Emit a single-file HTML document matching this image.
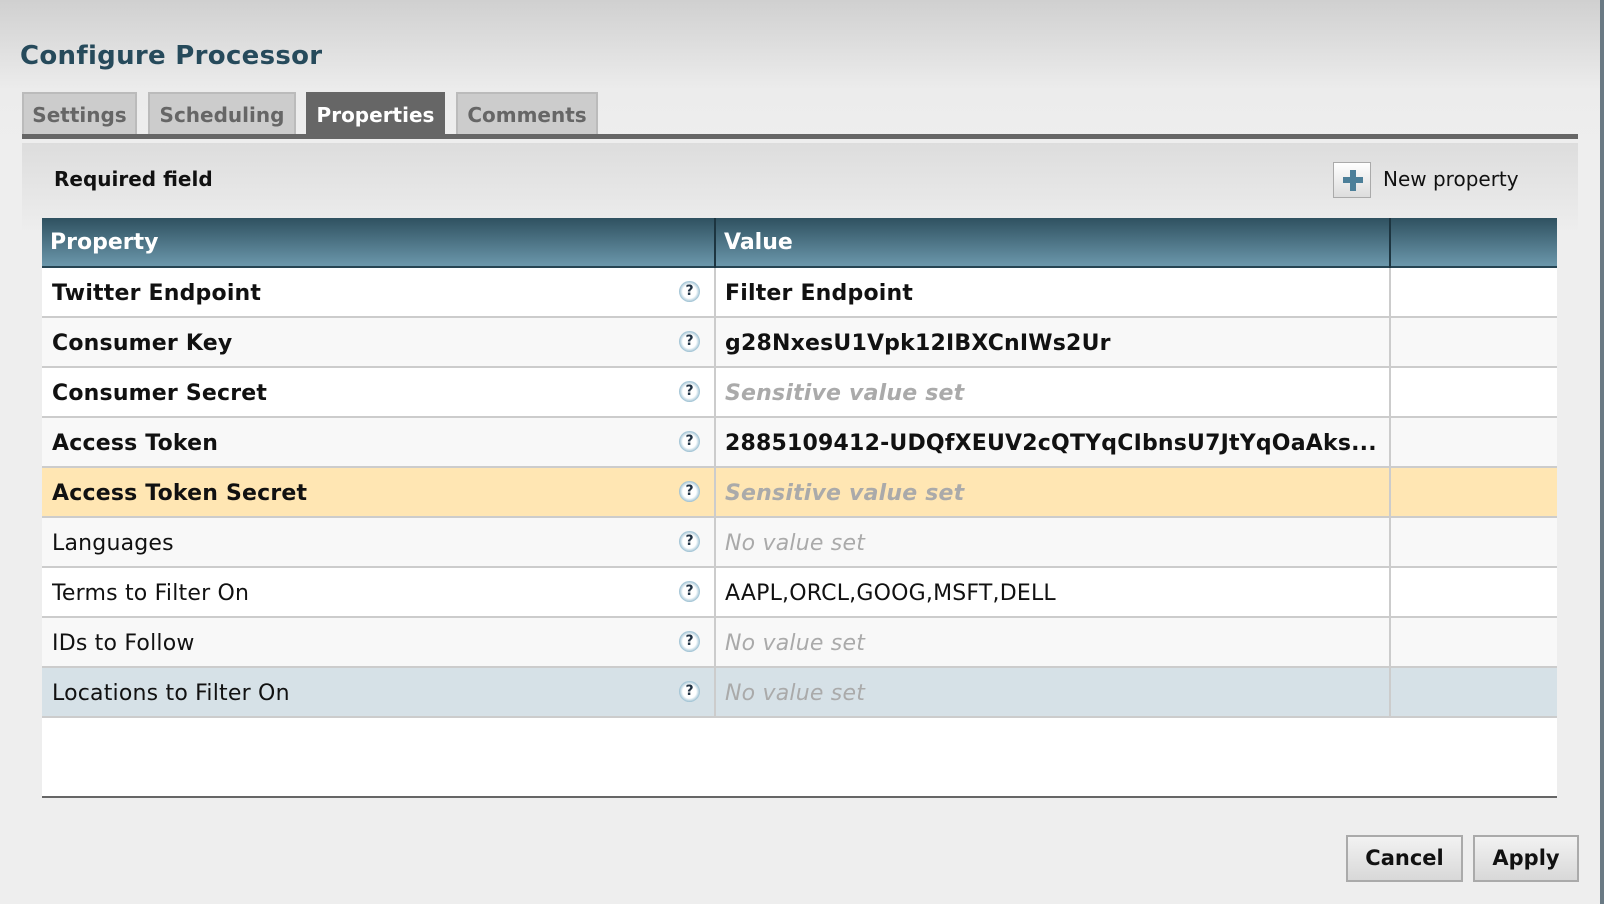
<!DOCTYPE html>
<html><head><style>
*{margin:0;padding:0;box-sizing:border-box}
body{width:1604px;height:904px;overflow:hidden;background:#eee;font-family:"DejaVu Sans","Liberation Sans",sans-serif;position:relative}
.top{position:absolute;left:0;top:0;width:1604px;height:150px;background:linear-gradient(#d0d0d0,#ececec 90px,#eee)}
.edge{position:absolute;left:1600px;top:0;width:4px;height:904px;background:#6a7a84}
h1{position:absolute;left:20px;top:41px;font-size:26px;color:#264a5b;font-weight:bold;letter-spacing:0.3px}
.tab{position:absolute;top:92px;height:42px;background:#ccc;border:2px solid #bbb;border-bottom:none;color:#666;font-weight:bold;font-size:20px;text-align:center;line-height:42px}
.tab.a{background:#666;color:#fff;border-color:#666}
.bar{position:absolute;left:22px;top:134px;width:1556px;height:5px;background:#666}
.panel{position:absolute;left:22px;top:143px;width:1556px;height:90px;background:linear-gradient(#ddd,#e8e8e8 60px,#eee)}
.req{position:absolute;left:54px;top:167px;font-size:20px;font-weight:bold;color:#111}
.np{position:absolute;left:1333px;top:162px;width:38px;height:36px;border:1px solid #aaa;background:linear-gradient(#fff,#ddd)}
.np:before{content:"";position:absolute;left:16px;top:7px;width:6px;height:21px;background:#4c7f99}
.np:after{content:"";position:absolute;left:9px;top:14px;width:20px;height:6px;background:#4c7f99}
.npt{position:absolute;left:1383px;top:167px;font-size:20px;color:#111}
.tbl{position:absolute;left:42px;top:218px;width:1515px;height:580px;background:#fff;border-bottom:2px solid #666}
.hd{position:absolute;left:0;top:0;width:1515px;height:50px;background:linear-gradient(#2f5160,#6b97ab);border-bottom:2px solid #264452;color:#fff;font-weight:bold;font-size:22px}
.hd span{position:absolute;top:12px}
.vl{position:absolute;top:0;width:2px;height:50px;background:#1d3540}
.row{position:absolute;left:0;width:1515px;height:50px;border-bottom:2px solid #ccc;font-size:22px;color:#111;letter-spacing:0.2px}
.row div{position:absolute;top:2px;height:48px;line-height:48px;white-space:nowrap;overflow:hidden}
.c1{left:10px;width:600px}
.c2{left:683px;width:700px}
.d{position:absolute;top:0;width:2px;height:50px;background:#ccc}
.b{font-weight:bold}
.g{color:#aaa;font-style:italic}
.q{position:absolute;left:637px;top:13px;width:21px;height:21px;border-radius:50%;background:radial-gradient(#fff 45%,#9cc0d2 70%,#5d8ea8);font-size:14px;font-weight:bold;color:#234;text-align:center;line-height:21px;letter-spacing:0}
.btn{position:absolute;top:835px;height:47px;border:2px solid #aaa;background:linear-gradient(#f2f2f2,#d8d8d8);font-weight:bold;font-size:21px;text-align:center;line-height:43px;color:#111}
</style></head><body>
<div class="top"></div>
<div class="edge"></div>
<h1>Configure Processor</h1>
<div class="tab" style="left:22px;width:115px">Settings</div>
<div class="tab" style="left:148px;width:148px">Scheduling</div>
<div class="tab a" style="left:306px;width:139px">Properties</div>
<div class="tab" style="left:456px;width:142px">Comments</div>
<div class="bar"></div>
<div class="panel"></div>
<div class="req">Required field</div>
<div class="np"></div><div class="npt">New property</div>
<div class="tbl">
<div class="hd"><span style="left:8px">Property</span><span style="left:682px">Value</span><div class="vl" style="left:672px"></div><div class="vl" style="left:1347px"></div></div>
<div class="row" style="top:50px;background:#fff"><div class="c1 b">Twitter Endpoint</div><span class="q">?</span><span class="d" style="left:672px"></span><div class="c2 b">Filter Endpoint</div><span class="d" style="left:1347px"></span></div>
<div class="row" style="top:100px;background:#f8f8f8"><div class="c1 b">Consumer Key</div><span class="q">?</span><span class="d" style="left:672px"></span><div class="c2 b">g28NxesU1Vpk12IBXCnIWs2Ur</div><span class="d" style="left:1347px"></span></div>
<div class="row" style="top:150px;background:#fff"><div class="c1 b">Consumer Secret</div><span class="q">?</span><span class="d" style="left:672px"></span><div class="c2 b g">Sensitive value set</div><span class="d" style="left:1347px"></span></div>
<div class="row" style="top:200px;background:#f8f8f8"><div class="c1 b">Access Token</div><span class="q">?</span><span class="d" style="left:672px"></span><div class="c2 b">2885109412-UDQfXEUV2cQTYqCIbnsU7JtYqOaAks...</div><span class="d" style="left:1347px"></span></div>
<div class="row" style="top:250px;background:#ffe6b3"><div class="c1 b">Access Token Secret</div><span class="q">?</span><span class="d" style="left:672px"></span><div class="c2 b g">Sensitive value set</div><span class="d" style="left:1347px"></span></div>
<div class="row" style="top:300px;background:#f8f8f8"><div class="c1">Languages</div><span class="q">?</span><span class="d" style="left:672px"></span><div class="c2 g">No value set</div><span class="d" style="left:1347px"></span></div>
<div class="row" style="top:350px;background:#fff"><div class="c1">Terms to Filter On</div><span class="q">?</span><span class="d" style="left:672px"></span><div class="c2">AAPL,ORCL,GOOG,MSFT,DELL</div><span class="d" style="left:1347px"></span></div>
<div class="row" style="top:400px;background:#f8f8f8"><div class="c1">IDs to Follow</div><span class="q">?</span><span class="d" style="left:672px"></span><div class="c2 g">No value set</div><span class="d" style="left:1347px"></span></div>
<div class="row" style="top:450px;background:#d6e1e7"><div class="c1">Locations to Filter On</div><span class="q">?</span><span class="d" style="left:672px"></span><div class="c2 g">No value set</div><span class="d" style="left:1347px"></span></div>
</div>
<div class="btn" style="left:1346px;width:117px">Cancel</div>
<div class="btn" style="left:1473px;width:106px">Apply</div>
</body></html>
